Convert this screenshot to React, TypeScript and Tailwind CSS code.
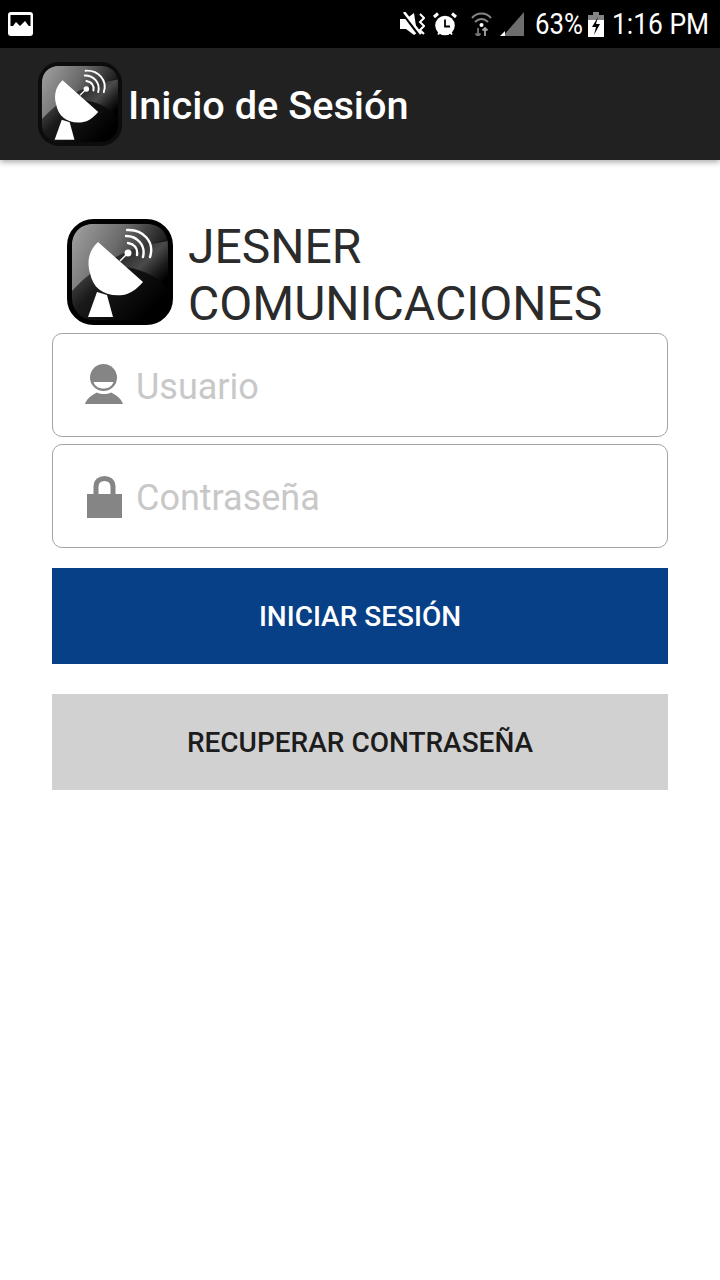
import React from 'react';

const Logo = ({ id, className, edge }: { id: string; className: string; edge: string }) => (
  <svg viewBox="0 0 106 106" className={className}>
    <defs>
      <linearGradient id={`${id}-top`} x1="0" y1="0" x2="1" y2="0.35">
        <stop offset="0" stopColor="#a2a2a2" />
        <stop offset="0.5" stopColor="#6c6c6c" />
        <stop offset="1" stopColor="#111111" />
      </linearGradient>
      <linearGradient id={`${id}-low`} x1="0" y1="0.3" x2="0.7" y2="1">
        <stop offset="0" stopColor="#6a6a6a" />
        <stop offset="0.45" stopColor="#1a1a1a" />
        <stop offset="1" stopColor="#000000" />
      </linearGradient>
      <linearGradient id={`${id}-band`} x1="0.2" y1="0.2" x2="1" y2="0.75">
        <stop offset="0" stopColor="#1a1a1a" />
        <stop offset="0.55" stopColor="#4a4a4a" />
        <stop offset="0.8" stopColor="#1c1c1c" />
        <stop offset="1" stopColor="#000000" />
      </linearGradient>
    </defs>
    <rect x="2.5" y="2.5" width="101" height="101" rx="24" fill={`url(#${id}-low)`} stroke={edge} strokeWidth="5" />
    <path d="M30 47 C50 30 75 26 101 22 L101 70 C85 50 55 45 30 47 Z" fill={`url(#${id}-band)`} />
    <path d="M5 72 C30 45 60 28 101 21 L101 28 C101 12 92 5 78 5 L28 5 C13 5 5 13 5 28 Z" fill={`url(#${id}-top)`} />
    <path d="M31 23 C21 32 20 44 23 54 C26 70 38 78 56 76 C63 75 70 70 76 63 Z" fill="#fff" />
    <path d="M30 73 L21 98 L46 98 L40 76 Z" fill="#fff" />
    <path d="M53 42 L60 35" stroke="#fff" strokeWidth="1.5" />
    <circle cx="61" cy="34" r="3.5" fill="#fff" />
    <g fill="none" stroke="#fff" strokeLinecap="round" strokeWidth="2.4">
      <path d="M61 24 C67 25 71 29 70 36" />
      <path d="M59 17 C70 17 79 26 76 38" />
      <path d="M60 11 C76 10 88 23 83 38" />
    </g>
  </svg>
);

const StatusIcons = () => (
  <div className="flex items-center">
    <svg viewBox="0 0 25 24" className="w-[25px] h-[24px] mr-[8px]">
      <path d="M0 7 L6 7 L14 1 L17 21 L14 23 L6 17 L0 17 Z" fill="#fff" />
      <path d="M2 0 L20 24" stroke="#000" strokeWidth="3" />
      <path d="M4 0 L21 22" stroke="#fff" strokeWidth="2.5" />
      <path d="M20 2 L24 6 L20 10 L24 14 L20 18 L24 22" stroke="#fff" strokeWidth="2" fill="none" />
    </svg>
    <svg viewBox="0 0 24 24" className="w-[24px] h-[24px] mr-[14px]">
      <circle cx="12" cy="13.5" r="9.8" fill="#fff" />
      <path d="M1 5 L5 1.5 M23 5 L19 1.5" stroke="#fff" strokeWidth="3" />
      <path d="M12 7.5 L12 14.5 L17 14.5" stroke="#000" strokeWidth="1.8" fill="none" />
      <path d="M5 22.5 L7 20 M19 22.5 L17 20" stroke="#fff" strokeWidth="2" />
    </svg>
    <svg viewBox="0 0 21 24" className="w-[21px] h-[24px] mr-[8px]">
      <g fill="none" stroke="#858585" strokeWidth="2">
        <path d="M1 6 C6 0 15 0 20 6" />
        <path d="M4 10 C8 6 13 6 17 10" />
      </g>
      <circle cx="10.5" cy="13" r="2" fill="#fff" />
      <path d="M7 16 V24 M4.5 21.5 L7 24 L9.5 21.5" stroke="#777" strokeWidth="1.8" fill="none" />
      <path d="M14 24 V16 M11.5 18.5 L14 16 L16.5 18.5" stroke="#a5a5a5" strokeWidth="1.8" fill="none" />
    </svg>
    <svg viewBox="0 0 24 24" className="w-[24px] h-[24px] mr-[11px]">
      <path d="M24 0 V24 H3 Z" fill="#6e6e6e" />
      <path d="M0 24 L5 19 V24 Z" fill="#fff" />
    </svg>
    <span className="w-[47px] text-[29px] leading-none text-white whitespace-nowrap origin-left scale-x-[0.89] mr-[6px]">63%</span>
    <svg viewBox="0 0 16 25" className="w-[16px] h-[25px] mr-[8px]">
      <rect x="5" y="0" width="6" height="3" fill="#858585" />
      <rect x="0" y="3" width="16" height="6" fill="#858585" />
      <rect x="0" y="8" width="16" height="17" fill="#fff" />
      <path d="M10 5 L4 15 H8 L6 23 L12 12 H8 Z" fill="#000" />
    </svg>
    <span className="w-[96px] text-[29px] leading-none text-white whitespace-nowrap origin-left scale-x-[0.91]">1:16 PM</span>
  </div>
);

export default function App() {
  return (
    <div className="w-[720px] h-[1280px] bg-white font-['Roboto',sans-serif] flex flex-col overflow-hidden">
      <div className="h-[48px] bg-black flex items-center justify-between pl-[8px] pr-[12px]">
        <svg viewBox="0 0 25 24" className="w-[25px] h-[24px]">
          <rect x="0" y="0" width="25" height="24" rx="3" fill="#fff" />
          <rect x="2.5" y="3" width="20" height="11" fill="#000" />
          <path d="M2 18 L8 10 L12 14 L17 9 L23 17 V14 H2 Z" fill="#fff" />
        </svg>
        <StatusIcons />
      </div>

      <div className="h-[112px] bg-[#212121] flex items-center pl-[38px] shadow-[0_2px_6px_rgba(0,0,0,0.35)] relative">
        <Logo id="bar" edge="#0c0c0c" className="w-[84px] h-[84px]" />
        <h1 className="ml-[6px] pt-[4px] text-[39.7px] font-medium text-white leading-none">Inicio de Sesión</h1>
      </div>

      <div className="px-[52px] pt-[58px] flex flex-col">
        <div className="flex items-start pl-[15px] h-[115px]">
          <Logo id="main" edge="#000" className="w-[106px] h-[106px] mt-[1px]" />
          <div className="ml-[15px] text-[48px] leading-[57px] text-[#2b2b2b]">
            JESNER
            <br />
            COMUNICACIONES
          </div>
        </div>

        <div className="h-[104px] border border-[#a3a3a3] rounded-[10px] flex items-center pl-[32px]">
          <svg viewBox="0 0 38 40" className="w-[38px] h-[40px] mb-[2px]">
            <circle cx="18.5" cy="13.5" r="13.5" fill="#858585" />
            <path d="M8.5 18 H28.5 C27 22.5 23 24.5 18.5 24.5 C14 24.5 10 22.5 8.5 18 Z" fill="#fff" />
            <path d="M0 40 C2 34 7 31 12 28.5 C16 30.5 22 30.5 26 28.5 C31 31 36 34 38 40 Z" fill="#858585" />
          </svg>
          <span className="ml-[13px] pt-[4px] text-[36px] leading-none text-[#c8c8c8]">Usuario</span>
        </div>

        <div className="h-[104px] mt-[7px] border border-[#a3a3a3] rounded-[10px] flex items-center pl-[34px]">
          <svg viewBox="0 0 35 42" className="w-[35px] h-[42px] mt-[2px]">
            <path d="M9 18 V11 C9 5 13 2.5 17.5 2.5 C22 2.5 26 5 26 11 V18" fill="none" stroke="#858585" strokeWidth="5" />
            <rect x="0" y="18" width="35" height="24" fill="#858585" />
          </svg>
          <span className="ml-[14px] pt-[4px] text-[36px] leading-none text-[#c8c8c8]">Contraseña</span>
        </div>

        <button className="h-[96px] mt-[20px] pt-[2px] bg-[#074087] text-white text-[28px] font-medium">INICIAR SESIÓN</button>
        <button className="h-[96px] mt-[30px] pt-[2px] bg-[#d1d1d1] text-[#1c1c1c] text-[28px] font-medium">RECUPERAR CONTRASEÑA</button>
      </div>
    </div>
  );
}
